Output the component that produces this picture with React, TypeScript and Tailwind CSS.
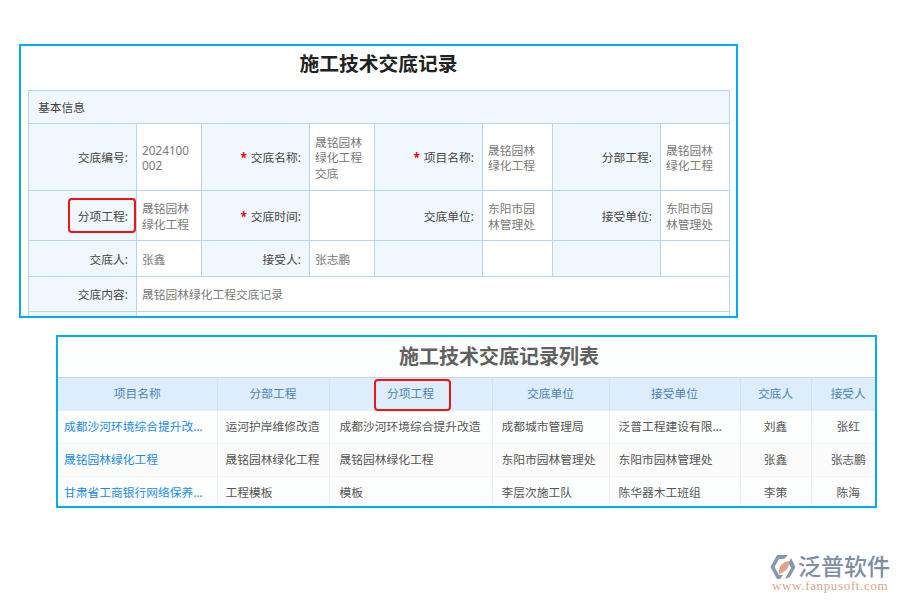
const labelCell = "bg-[#f1f7fe] border border-[#b4d6f1] text-right pr-[8px] pl-[4px] pt-[2px] text-[#444444] align-middle font-normal";
const valueCell = "bg-white border border-[#b4d6f1] pl-[5px] pr-[10px] pt-[2px] text-[#7a7a7a] align-middle break-all";

function Label({ text, required, mark }: { text?: string; required?: boolean; mark?: boolean }) {
  return (
    <td className={labelCell + (mark ? " relative" : "")}>
      {required && <span className="text-[#f00000] mr-[4px] font-bold">*</span>}
      {text}
      {mark && <span className="absolute left-[39px] top-[7px] w-[68px] h-[35px] border-2 border-[#ee1410] rounded-[4px]" />}
    </td>
  );
}

function Value({ text }: { text?: string }) {
  return <td className={valueCell}>{text}</td>;
}

function FormPanel() {
  return (
    <section className="w-[719px] h-[274px] border-2 border-[#00aeef] bg-white overflow-hidden pl-[7px]">
      <h1 className="w-[701px] h-[44px] flex items-center justify-center text-[19.75px] font-bold text-[#222222] pb-[8px]">施工技术交底记录</h1>
      <table className="table-fixed border-collapse w-[701px] text-[11.75px] leading-[15.4px]">
        <colgroup>
          <col className="w-[108px]" />
          <col className="w-[65px]" />
          <col className="w-[108px]" />
          <col className="w-[65px]" />
          <col className="w-[108px]" />
          <col className="w-[70px]" />
          <col className="w-[108px]" />
          <col className="w-[69px]" />
        </colgroup>
        <tbody>
          <tr className="h-[33px]">
            <td colSpan={8} className="bg-[#f1f7fe] border border-[#b4d6f1] pl-[9px] pt-[1px] text-[#444444] align-middle">基本信息</td>
          </tr>
          <tr className="h-[67px]">
            <Label text="交底编号:" />
            <Value text="2024100002" />
            <Label text="交底名称:" required />
            <Value text="晟铭园林绿化工程交底" />
            <Label text="项目名称:" required />
            <Value text="晟铭园林绿化工程" />
            <Label text="分部工程:" />
            <Value text="晟铭园林绿化工程" />
          </tr>
          <tr className="h-[50px]">
            <Label text="分项工程:" mark />
            <Value text="晟铭园林绿化工程" />
            <Label text="交底时间:" required />
            <Value />
            <Label text="交底单位:" />
            <Value text="东阳市园林管理处" />
            <Label text="接受单位:" />
            <Value text="东阳市园林管理处" />
          </tr>
          <tr className="h-[36px]">
            <Label text="交底人:" />
            <Value text="张鑫" />
            <Label text="接受人:" />
            <Value text="张志鹏" />
            <Label />
            <Value />
            <Label />
            <Value />
          </tr>
          <tr className="h-[35px]">
            <Label text="交底内容:" />
            <td colSpan={7} className={valueCell}>晟铭园林绿化工程交底记录</td>
          </tr>
          <tr className="h-[35px]">
            <Label />
            <td colSpan={7} className={valueCell} />
          </tr>
        </tbody>
      </table>
    </section>
  );
}

const headers = ["项目名称", "分部工程", "分项工程", "交底单位", "接受单位", "交底人", "接受人"];
const rows = [
  ["成都沙河环境综合提升改…", "运河护岸维修改造", "成都沙河环境综合提升改造", "成都城市管理局", "泛普工程建设有限…", "刘鑫", "张红"],
  ["晟铭园林绿化工程", "晟铭园林绿化工程", "晟铭园林绿化工程", "东阳市园林管理处", "东阳市园林管理处", "张鑫", "张志鹏"],
  ["甘肃省工商银行网络保养…", "工程模板", "模板", "李层次施工队", "陈华器木工班组", "李策", "陈海"],
];

const cellPad = ["pl-[6px] text-[#1c8bea]", "pl-[8px] text-[#555555]", "pl-[10px] text-[#555555]", "pl-[9px] text-[#555555]", "pl-[9px] text-[#555555]", "text-center text-[#555555]", "text-center text-[#555555]"];

function ListPanel() {
  return (
    <section className="mt-[17px] ml-[37px] w-[821px] h-[173px] border-2 border-[#00aeef] bg-[#fdfefe] overflow-hidden">
      <h2 className="h-[40px] flex items-center justify-center text-[20px] font-bold text-[#606060] pl-[65px]">施工技术交底记录列表</h2>
      <table className="table-fixed border-collapse w-[827px] text-[11.75px]">
        <colgroup>
          <col className="w-[159px]" />
          <col className="w-[112px]" />
          <col className="w-[163px]" />
          <col className="w-[117px]" />
          <col className="w-[131px]" />
          <col className="w-[71px]" />
          <col className="w-[74px]" />
        </colgroup>
        <thead>
          <tr className="h-[33px] bg-[#deedfc] border-t border-[#b9d8f3]">
            {headers.map((h, i) => (
              <th key={h} className={"font-normal text-[#4b83b5] text-center border-r border-[#d0e3f5] last:border-r-0" + (i === 2 ? " relative" : "")}>
                {h}
                {i === 2 && <span className="absolute left-[44px] top-[1px] w-[77px] h-[32px] border-2 border-[#ee1410] rounded-[4px]" />}
              </th>
            ))}
          </tr>
        </thead>
        <tbody>
          {rows.map((row, r) => (
            <tr key={r} className={"h-[33px] border-b border-[#f0f2f5] " + (r === 1 ? "bg-[#fbfbfb]" : "bg-[#fdfefe]")}>
              {row.map((cell, c) => (
                <td key={c} className={"whitespace-nowrap border-r border-[#eef0f4] last:border-r-0 " + cellPad[c]}>
                  {cell}
                </td>
              ))}
            </tr>
          ))}
        </tbody>
      </table>
    </section>
  );
}

function Logo() {
  return (
    <div className="mt-[46px] ml-[751px] flex flex-col w-[120px]">
      <div className="flex items-center h-[25px]">
        <svg width="26" height="26" viewBox="0 0 26 26" className="shrink-0">
          <path d="M7 1 H18 L14 5 H9 L4.500 13 L9 21 H13 L10 25 H7 L0.500 13 Z" fill="#8797ae" />
          <path d="M21 4 L25.500 13 L20 23 L15 25 L21 14 L18.500 9 Z" fill="#8797ae" />
          <path d="M9 20 C8 13 12 8 19 7 C20 13 16 18 9 20 Z" fill="#e2a283" />
        </svg>
        <span className="ml-[2px] text-[23px] leading-[25px] whitespace-nowrap text-[#7e8ea6] font-medium">泛普软件</span>
      </div>
      <span className="mt-[1px] ml-[2px] text-[13px] leading-[12px] tracking-[0.65px] whitespace-nowrap text-[#dca68a] font-['Liberation_Serif',serif]">www.fanpusoft.com</span>
    </div>
  );
}

export default function App() {
  return (
    <main className="w-[900px] h-[600px] overflow-hidden bg-white pt-[44px] pl-[19px] font-['Noto_Sans','Noto_Sans_CJK_SC',sans-serif]">
      <FormPanel />
      <ListPanel />
      <Logo />
    </main>
  );
}
